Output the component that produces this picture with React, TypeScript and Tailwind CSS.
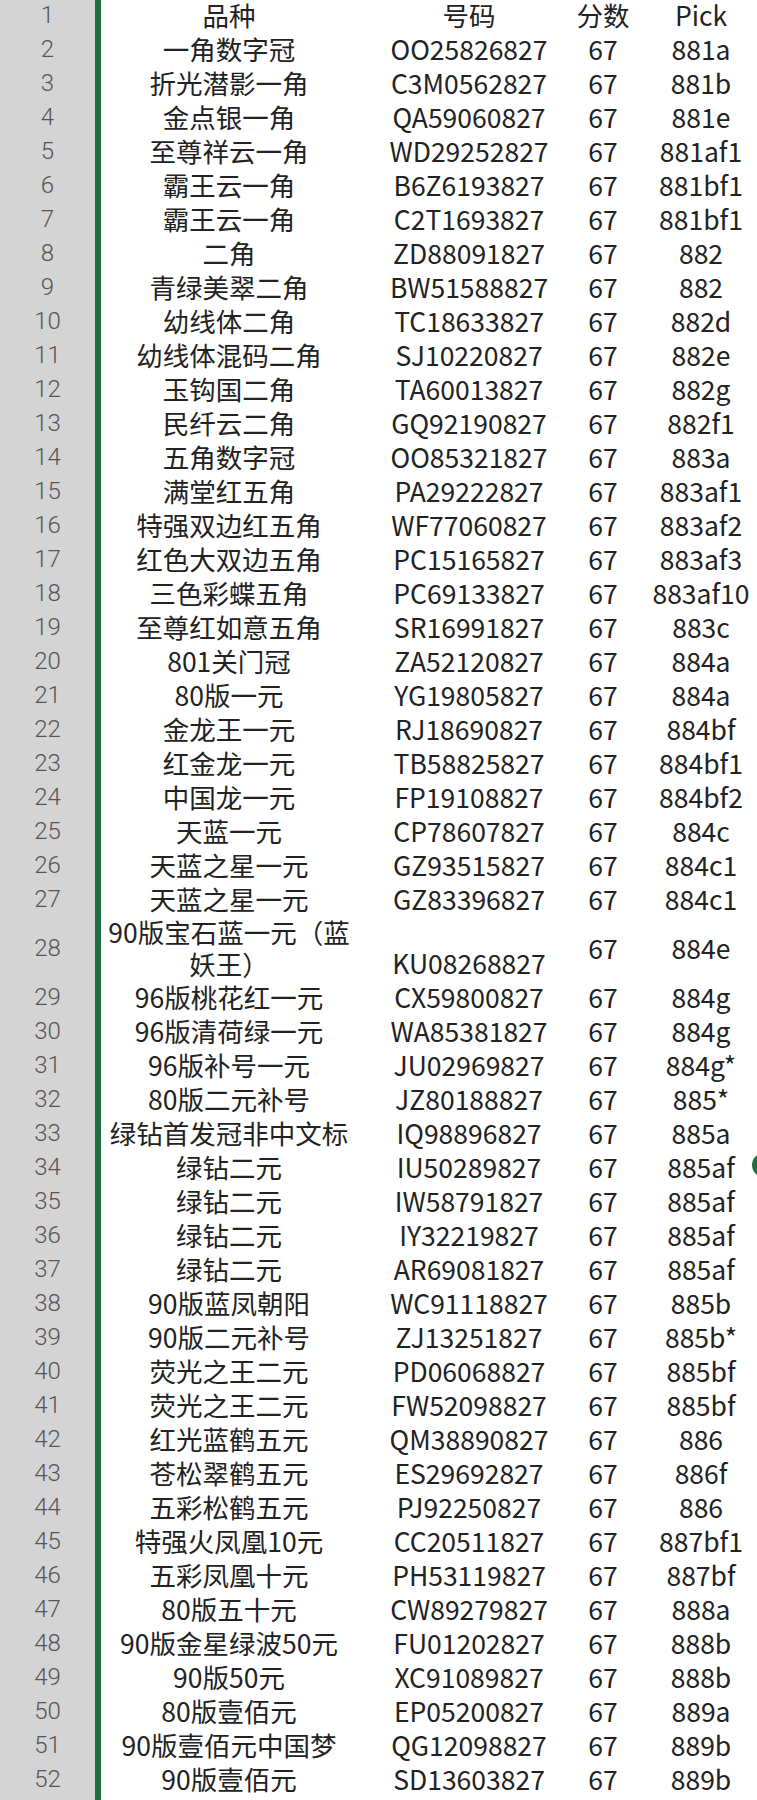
import React from "react";

type Row = [string, string, string, string];

const rows: Row[] = [
  ["品种", "号码", "分数", "Pick"],
  ["一角数字冠", "OO25826827", "67", "881a"],
  ["折光潜影一角", "C3M0562827", "67", "881b"],
  ["金点银一角", "QA59060827", "67", "881e"],
  ["至尊祥云一角", "WD29252827", "67", "881af1"],
  ["霸王云一角", "B6Z6193827", "67", "881bf1"],
  ["霸王云一角", "C2T1693827", "67", "881bf1"],
  ["二角", "ZD88091827", "67", "882"],
  ["青绿美翠二角", "BW51588827", "67", "882"],
  ["幼线体二角", "TC18633827", "67", "882d"],
  ["幼线体混码二角", "SJ10220827", "67", "882e"],
  ["玉钩国二角", "TA60013827", "67", "882g"],
  ["民纤云二角", "GQ92190827", "67", "882f1"],
  ["五角数字冠", "OO85321827", "67", "883a"],
  ["满堂红五角", "PA29222827", "67", "883af1"],
  ["特强双边红五角", "WF77060827", "67", "883af2"],
  ["红色大双边五角", "PC15165827", "67", "883af3"],
  ["三色彩蝶五角", "PC69133827", "67", "883af10"],
  ["至尊红如意五角", "SR16991827", "67", "883c"],
  ["801关门冠", "ZA52120827", "67", "884a"],
  ["80版一元", "YG19805827", "67", "884a"],
  ["金龙王一元", "RJ18690827", "67", "884bf"],
  ["红金龙一元", "TB58825827", "67", "884bf1"],
  ["中国龙一元", "FP19108827", "67", "884bf2"],
  ["天蓝一元", "CP78607827", "67", "884c"],
  ["天蓝之星一元", "GZ93515827", "67", "884c1"],
  ["天蓝之星一元", "GZ83396827", "67", "884c1"],
  ["90版宝石蓝一元（蓝妖王）", "KU08268827", "67", "884e"],
  ["96版桃花红一元", "CX59800827", "67", "884g"],
  ["96版清荷绿一元", "WA85381827", "67", "884g"],
  ["96版补号一元", "JU02969827", "67", "884g*"],
  ["80版二元补号", "JZ80188827", "67", "885*"],
  ["绿钻首发冠非中文标", "IQ98896827", "67", "885a"],
  ["绿钻二元", "IU50289827", "67", "885af"],
  ["绿钻二元", "IW58791827", "67", "885af"],
  ["绿钻二元", "IY32219827", "67", "885af"],
  ["绿钻二元", "AR69081827", "67", "885af"],
  ["90版蓝凤朝阳", "WC91118827", "67", "885b"],
  ["90版二元补号", "ZJ13251827", "67", "885b*"],
  ["荧光之王二元", "PD06068827", "67", "885bf"],
  ["荧光之王二元", "FW52098827", "67", "885bf"],
  ["红光蓝鹤五元", "QM38890827", "67", "886"],
  ["苍松翠鹤五元", "ES29692827", "67", "886f"],
  ["五彩松鹤五元", "PJ92250827", "67", "886"],
  ["特强火凤凰10元", "CC20511827", "67", "887bf1"],
  ["五彩凤凰十元", "PH53119827", "67", "887bf"],
  ["80版五十元", "CW89279827", "67", "888a"],
  ["90版金星绿波50元", "FU01202827", "67", "888b"],
  ["90版50元", "XC91089827", "67", "888b"],
  ["80版壹佰元", "EP05200827", "67", "889a"],
  ["90版壹佰元中国梦", "QG12098827", "67", "889b"],
  ["90版壹佰元", "SD13603827", "67", "889b"],
  ["", "", "", ""],
];

function SheetRow({ n, r }: { n: number; r: Row }) {
  const tall = n === 28;
  return (
    <div
      className={
        "grid grid-cols-[95px_6px_256px_224px_44px_152px] overflow-hidden " +
        (tall ? "h-[64px]" : "h-[34px]")
      }
    >
      <div className="bg-[#d4d4d4] flex items-center justify-center font-[Roboto,sans-serif] font-light text-[24px] leading-[34px] text-[#555555]">
        {n}
      </div>
      <div className="bg-[#1f7145]" />
      <div
        className={
          "flex items-end justify-center text-center px-[4px] " +
          (tall ? "leading-[32px]" : "leading-[34px] whitespace-nowrap")
        }
      >
        <span>{r[0]}</span>
      </div>
      <div className="flex items-end justify-center whitespace-nowrap leading-[34px]">
        <span>{r[1]}</span>
      </div>
      <div className="flex items-center justify-center whitespace-nowrap leading-[34px]">
        <span>{r[2]}</span>
      </div>
      <div className="flex items-center justify-center whitespace-nowrap leading-[34px]">
        <span>{r[3]}</span>
      </div>
    </div>
  );
}

export default function App() {
  return (
    <div className="relative w-[757px] h-[1800px] overflow-hidden bg-white text-[#222222] text-[26.5px] font-normal font-['Noto_Sans_CJK_SC','Noto_Sans',sans-serif]">
      <div className="-mt-[2px]">
        {rows.map((r, i) => (
          <SheetRow key={i} n={i + 1} r={r} />
        ))}
      </div>
      <div className="absolute left-[752px] top-[1153px] w-[24px] h-[24px] rounded-full bg-[#1f7145]" />
    </div>
  );
}
